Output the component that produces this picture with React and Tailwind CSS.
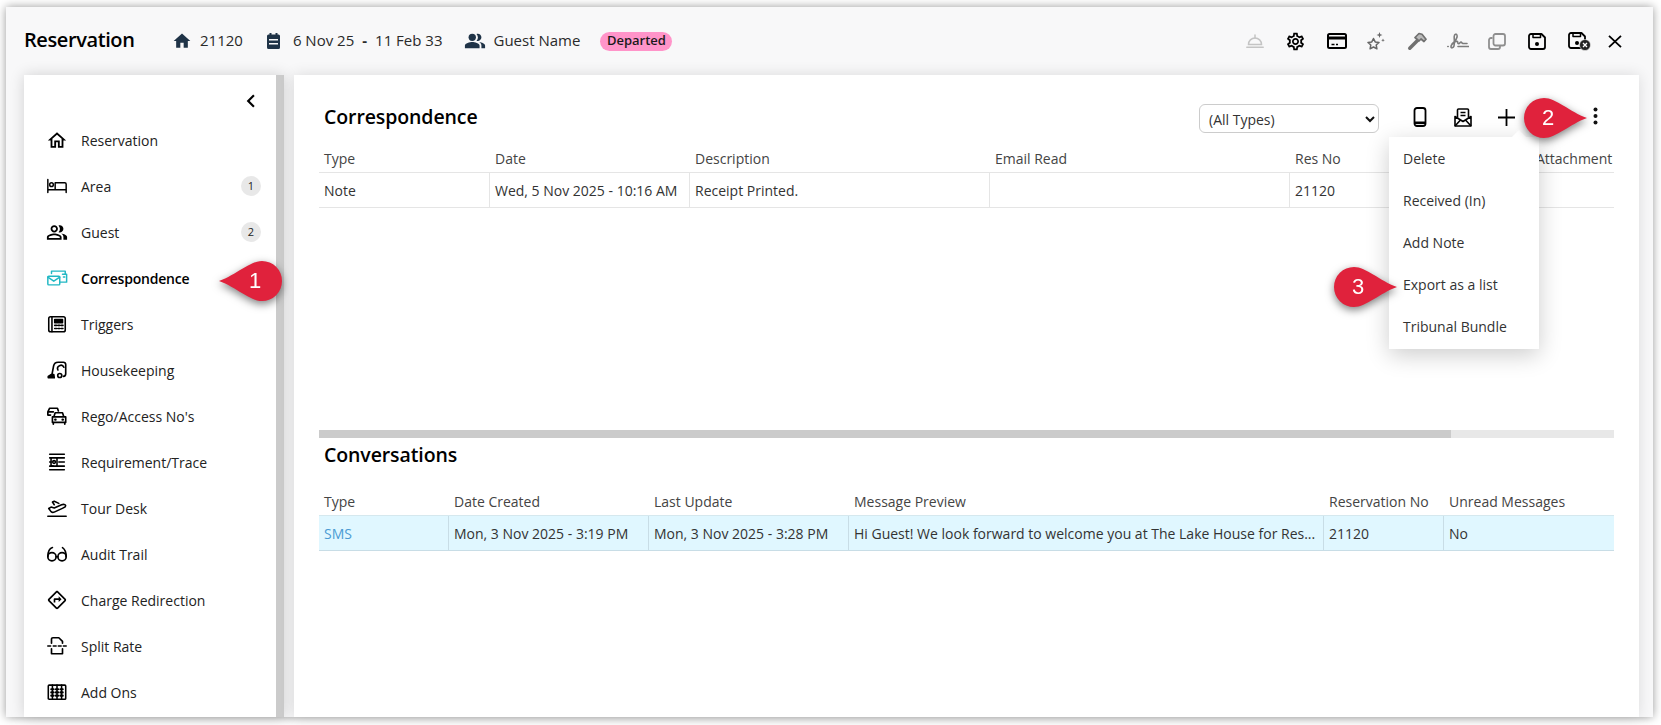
import React from "react";
import { MdHome, MdPeopleAlt, MdOutlineHome, MdOutlinePeopleAlt, MdOutlineDirections, MdOutlineSettings, MdChevronLeft } from "react-icons/md";

// hand drawn where the icon packages have nothing close
const Stroke = ({ children, size = 22, sw = 1.6, className = "" }) => (
    <svg width={size} height={size} viewBox="0 0 24 24" fill="none" stroke="currentColor" strokeWidth={sw} strokeLinecap="round" strokeLinejoin="round" className={className}>
        {children}
    </svg>
);

const BedIcon = () => (
    <Stroke>
        <path d="M2 5v14M2 16h20M22 19V10a1.500 1.500 0 0 0-1.500-1.500H10V16" />
        <circle cx="6" cy="10.500" r="2" />
    </Stroke>
);
const MailsIcon = () => (
    <Stroke className="text-[#22b8c4]">
        <path d="M6 7V4.500h15V7M18 8h4.500v8.500H15" />
        <rect x="2" y="10" width="13" height="9.500" rx="1" />
        <path d="M2 11l6.500 4.500L15 11M19 11h1.500" />
    </Stroke>
);
const TriggersIcon = () => (
    <Stroke sw={1.7}>
        <rect x="3" y="4" width="18" height="16.500" rx="2" />
        <path d="M6.500 4v16.500" />
        <path fill="currentColor" d="M9.500 7h8.500v3.500H9.500z" />
        <path d="M9.500 13.500h2M13 13.500h2M16.500 13.500h2M9.500 17h2M13 17h2M16.500 17h2" />
    </Stroke>
);
const HousekeepingIcon = () => (
    <Stroke sw={1.8}>
        <path d="M6.500 17l1.800-9.500A5 5 0 0 1 13.200 3.500H19a2.500 2.500 0 0 1 2.500 2.500v10a3 3 0 0 1-2.500 3" />
        <path fill="currentColor" d="M2.500 20.500v-1.500l3-2h3l.5 3.500z" />
        <circle cx="15" cy="18" r="2.200" />
        <path d="M13 12a3.500 3.500 0 0 1 6.500-3" />
    </Stroke>
);
const RegoIcon = () => (
    <Stroke sw={1.8}>
        <path d="M2 11V7.500l2-4h8.500l1 3M2 7.500h6M2 11h3" />
        <path d="M8.500 13l1.500-4.500h8l1.500 4.500M7 13h14.500v6H7zM8 19v2M20.500 19v2" />
        <path strokeWidth="2.400" d="M10 16h.5M18 16h.5" />
    </Stroke>
);
const RequirementIcon = () => (
    <Stroke sw={1.7}>
        <path d="M4 3.500h16M4 20.500h16M12 7.500h8M4 7.500h1.500M14 12h6M4 12h1.500M12 16.500h8M4 16.500h4" />
        <rect x="5.500" y="7.500" width="6.500" height="9" rx="0.500" />
        <circle cx="8.800" cy="12" r="1.500" />
    </Stroke>
);
const PlaneIcon = () => (
    <Stroke sw={1.7}>
        <path d="M2 21h20" />
        <path d="M3 12.500l2.500-1.500 3.500 1 8-3.500c2-.8 4.500-.5 4.500 1 0 1.200-1.500 2-3 2.600L9 16.500c-1.500.5-2.500.3-3.500-.5z" />
        <path d="M9 8.500l-2-3 2-.8 5 2.300" />
    </Stroke>
);
const GlassesIcon = () => (
    <Stroke sw={1.8}>
        <circle cx="6.500" cy="15" r="4.500" />
        <circle cx="17.500" cy="15" r="4.500" />
        <path d="M11 15h2M2 15c0-5 2-9 5-10M22 15c0-5-1-8-4-10" />
    </Stroke>
);
const SplitIcon = () => (
    <Stroke sw={1.8}>
        <path d="M6 9V4.500a1.500 1.500 0 0 1 1.500-1.500H14l4 4v2M6 15v5.500h12V15" />
        <path d="M2 12h3M8 12h3M13.500 12h3M19 12h3" />
    </Stroke>
);
const AbacusIcon = () => (
    <Stroke sw={1.7}>
        <rect x="2.500" y="4.500" width="19" height="15.500" rx="1" />
        <path d="M7 4.500V20M12 4.500V20M17 4.500V20" />
        <path strokeWidth="2.400" d="M5.800 9h2.400M10.800 9h2.400M15.800 9h2.400M5.800 12.500h2.400M10.800 12.500h2.400M15.800 12.500h2.400M5.800 16h2.400M10.800 16h2.400M15.800 16h2.400" />
    </Stroke>
);

const navItems = [
    { label: "Reservation", icon: <MdOutlineHome size={23} /> },
    { label: "Area", icon: <BedIcon />, badge: 1 },
    { label: "Guest", icon: <MdOutlinePeopleAlt size={23} />, badge: 2 },
    { label: "Correspondence", icon: <MailsIcon />, active: true },
    { label: "Triggers", icon: <TriggersIcon /> },
    { label: "Housekeeping", icon: <HousekeepingIcon /> },
    { label: "Rego/Access No's", icon: <RegoIcon /> },
    { label: "Requirement/Trace", icon: <RequirementIcon /> },
    { label: "Tour Desk", icon: <PlaneIcon /> },
    { label: "Audit Trail", icon: <GlassesIcon /> },
    { label: "Charge Redirection", icon: <MdOutlineDirections size={20} /> },
    { label: "Split Rate", icon: <SplitIcon /> },
    { label: "Add Ons", icon: <AbacusIcon /> },
];

// header toolbar, viewBox equals the drawn size in px
const BellIcon = () => (
    <svg width="18" height="14" viewBox="0 0 18 14" fill="none" stroke="#c4c4c4" strokeWidth="1.500" strokeLinecap="round">
        <path d="M2.500 10.500a6.500 6.500 0 0 1 13 0z" />
        <path d="M9 1v3M.8 13.200h16.400" />
    </svg>
);
const CardIcon = () => (
    <svg width="20" height="16" viewBox="0 0 20 16" fill="none" stroke="#000" strokeWidth="2">
        <rect x="1" y="1" width="18" height="14" rx="1.500" />
        <path d="M1 5h18" strokeWidth="3" />
        <path d="M4.500 11.500h3M9 11.500h2" strokeWidth="1.600" />
    </svg>
);
const StarsIcon = () => (
    <svg width="18" height="18" viewBox="0 0 18 18" fill="none" stroke="#666" strokeWidth="1.500" strokeLinejoin="round">
        <path d="M6.500 6.500l1.700 3.400 3.800.5-2.800 2.600.7 3.800-3.400-1.800-3.400 1.800.7-3.800L1 10.400l3.800-.5z" />
        <path fill="#666" stroke="none" d="M12.500 0l.8 2.200 2.200.8-2.200.8-.8 2.200-.8-2.200-2.200-.8 2.200-.8zM16 6.500l.5 1.300 1.300.5-1.300.5-.5 1.300-.5-1.300-1.300-.5 1.300-.5z" />
    </svg>
);
const HammerIcon = () => (
    <svg width="20" height="19" viewBox="0 0 20 19">
        <path d="M1.500 15l8-8 2.500 2.500-8 8a1.700 1.700 0 0 1-2.500-2.500z" fill="#707070" />
        <path d="M8 5.500l4-4 3 .8 4 5-2 2.200-3-2.500-2 2z" fill="#bbb" stroke="#707070" strokeWidth="1.700" strokeLinejoin="round" />
    </svg>
);
const SignatureIcon = () => (
    <svg width="22" height="16" viewBox="0 0 22 16" fill="none" stroke="#7c7c7c" strokeWidth="1.600" strokeLinecap="round" strokeLinejoin="round">
        <path d="M5 11C8 9 11 4 10 2 9.300.5 7.500 1.200 7.200 3.500 7 6 8 10 7 13c-.6 2-3 2.500-3 .8 0-2.500 4-5.500 6-5.500 1.500 0 0 2.500 1.500 2.500S13 9 14 9s.5 1.500 2 1.500h4" />
        <path d="M11 13.500h10.500M.8 13.500h.4" />
    </svg>
);
const CopyIcon = () => (
    <svg width="18" height="17" viewBox="0 0 18 17" fill="none" stroke="#8f8f8f" strokeWidth="1.800" strokeLinejoin="round">
        <path d="M4.500 5H3a2 2 0 0 0-2 2v7a2 2 0 0 0 2 2h7a2 2 0 0 0 2-2v-1.500" />
        <rect x="5.500" y="1" width="11.500" height="11.500" rx="2" />
    </svg>
);
const SaveIcon = () => (
    <svg width="18" height="17" viewBox="0 0 18 17" fill="none" stroke="#000" strokeWidth="1.800" strokeLinejoin="round">
        <path d="M3 1h10.500L17 4.500V14a2 2 0 0 1-2 2H3a2 2 0 0 1-2-2V3a2 2 0 0 1 2-2z" />
        <path d="M5 1v3.500h7.500V1" strokeWidth="1.500" />
        <circle cx="9" cy="11" r="2" fill="#000" stroke="none" />
    </svg>
);
const SaveXIcon = () => (
    <span className="relative block h-[19px] w-[23px]">
        <SaveIcon />
        <svg width="12" height="12" viewBox="0 0 12 12" className="absolute bottom-0 right-0">
            <circle cx="6" cy="6" r="5.500" fill="#222" stroke="#f8f8f9" strokeWidth="0.600" />
            <path d="M4 4l4 4M8 4l-4 4" stroke="#fff" strokeWidth="1.300" />
        </svg>
    </span>
);
const CloseIcon = () => (
    <svg width="14" height="13" viewBox="0 0 14 13" fill="none" stroke="#000" strokeWidth="1.800"><path d="M1 .8l12 11.400M13 .8L1 12.200" /></svg>
);
const CalendarIcon = () => (
    <svg width="13" height="16" viewBox="0 0 13 16" fill="#1f3347" fillRule="evenodd">
        <path d="M2.500 0h2v1.500h4V0h2v1.500h1A1.500 1.500 0 0 1 13 3v11.500a1.500 1.500 0 0 1-1.500 1.500h-10A1.500 1.500 0 0 1 0 14.500V3a1.500 1.500 0 0 1 1.500-1.500h1zM2 6v1.500h9V6zM2 10v1.500h9V10z" />
    </svg>
);
const PhoneIcon = () => (
    <svg width="14" height="20" viewBox="0 0 14 20" fill="none" stroke="#000" strokeWidth="1.800">
        <rect x="1.500" y="1" width="11" height="18" rx="2.500" />
        <path d="M1.500 15.800h11" strokeWidth="2.600" />
    </svg>
);
const OpenMailIcon = () => (
    <svg width="18" height="19" viewBox="0 0 18 19" fill="none" stroke="#000" strokeWidth="1.600" strokeLinejoin="round">
        <path d="M3.500 9.500V2a1 1 0 0 1 1-1h9a1 1 0 0 1 1 1v7.500" />
        <path d="M6.500 4.500h5M6.500 7.500h5" />
        <path d="M1 8.500V18h16V8.500L9 13.500z" />
        <path d="M1 18l5.500-6M17 18l-5.500-6" />
    </svg>
);
const PlusIcon = () => (
    <svg width="17" height="17" viewBox="0 0 17 17" stroke="#000" strokeWidth="1.800"><path d="M8.500 0v17M0 8.500h17" /></svg>
);
const KebabIcon = () => (
    <svg width="5" height="18" viewBox="0 0 5 18" fill="#111"><circle cx="2.500" cy="2.500" r="2" /><circle cx="2.500" cy="9" r="2" /><circle cx="2.500" cy="15.500" r="2" /></svg>
);

const Callout = ({ n, left, className, textClass }) => (
    <div className={`absolute h-[40px] w-[63px] drop-shadow-[0_3px_4px_rgba(0,0,0,0.5)] ${className}`}>
        <svg width="63" height="40" viewBox="0 0 63 40" className={`absolute inset-0 ${left ? "-scale-x-100" : ""}`}>
            <path d="M20 0C32 0 46 14 63 20C46 26 32 40 20 40A20 20 0 0 1 20 0Z" fill="#e0223c" />
        </svg>
        <span className={`absolute top-[8px] font-['Liberation_Sans',sans-serif] text-[22px] leading-[24px] text-white ${textClass}`}>{n}</span>
    </div>
);

const firstCols = "grid grid-cols-[171px_200px_300px_300px_241px_83px]";
const secondCols = "grid grid-cols-[130px_200px_200px_475px_120px_170px]";
const headCell = "flex items-center px-[5px] pb-[2px] whitespace-nowrap";
const bodyCell = "flex items-center px-[5px] whitespace-nowrap border-r";

export default function App() {
    return (
        <div className="relative h-[725px] w-[1661px] overflow-hidden bg-white font-['Open_Sans',sans-serif] text-[14px] text-[#333]">
            <div className="ml-[6px] mt-[7px] flex h-[710px] w-[1647px] flex-col bg-[#f8f8f9] shadow-[0_0_9px_rgba(0,0,0,0.4)]">
                <header className="flex h-[68px] shrink-0 items-center pl-[18px] text-[#2a2a2a]">
                    <h1 className="w-[148px] pb-[2px] text-[20px] font-semibold tracking-[-0.4px] text-black">Reservation</h1>
                    <MdHome size={20} className="text-[#1f3347]" />
                    <span className="ml-[8px] pb-[2px] text-[15px]">21120</span>
                    <span className="ml-[24px]"><CalendarIcon /></span>
                    <span className="ml-[13px] pb-[2px] text-[15px]">6 Nov 25</span>
                    <span className="mx-[8px] pb-[2px] text-[15px] font-bold">-</span>
                    <span className="pb-[2px] text-[15px]">11 Feb 33</span>
                    <MdPeopleAlt size={22} className="ml-[21px] text-[#1f3347]" />
                    <span className="ml-[8px] pb-[2px] text-[15px]">Guest Name</span>
                    <span className="ml-[20px] flex h-[19px] w-[72px] items-center justify-center rounded-full bg-[#ff94c9] text-[13px] font-semibold text-[#1a1a1a]">Departed</span>
                    <div className="ml-auto flex items-center pr-[31px]">
                        <span className="mr-[21px]"><BellIcon /></span>
                        <MdOutlineSettings size={21} className="mr-[21px] text-black" />
                        <span className="mr-[20px]"><CardIcon /></span>
                        <span className="mr-[22px]"><StarsIcon /></span>
                        <span className="mr-[20px]"><HammerIcon /></span>
                        <span className="mr-[19px]"><SignatureIcon /></span>
                        <span className="mr-[22px]"><CopyIcon /></span>
                        <span className="mr-[22px]"><SaveIcon /></span>
                        <span className="mr-[17px]"><SaveXIcon /></span>
                        <CloseIcon />
                    </div>
                </header>

                <div className="flex min-h-0 flex-1 pl-[18px] pr-[14px]">
                    <div className="flex shrink-0 shadow-[0_0_14px_rgba(0,0,0,0.16)]">
                        <aside className="relative w-[252px] shrink-0 overflow-hidden bg-white pt-[42px]">
                            <MdChevronLeft size={26} className="absolute left-[214px] top-[13px] text-black" />
                            {navItems.map((item) => (
                                <div key={item.label} className="flex h-[46px] items-center pl-[22px] pr-[15px] text-[#222]">
                                    <span className="flex w-[22px] items-center justify-center text-black">{item.icon}</span>
                                    <span className={`ml-[13px] ${item.active ? "font-semibold tracking-[-0.2px] text-black" : ""}`}>{item.label}</span>
                                    {item.badge && (
                                        <span className="ml-auto flex h-[20px] w-[20px] items-center justify-center rounded-full bg-[#e8e8e8] text-[11px]">{item.badge}</span>
                                    )}
                                </div>
                            ))}
                        </aside>
                        <div className="w-[8px] shrink-0 bg-[#cbcbcb]" />
                    </div>
                    <main className="ml-[10px] flex min-w-0 flex-1 flex-col bg-white pl-[25px] pr-[25px] pt-[13px] shadow-[0_0_14px_rgba(0,0,0,0.12)]">
                        <section className="h-[342px] shrink-0">
                            <div className="flex h-[58px] items-center pl-[5px] pr-[16px]">
                                <h2 className="text-[19.500px] font-semibold tracking-[-0.1px] text-black">Correspondence</h2>
                                <div className="relative ml-auto mt-[3px] flex h-[29px] w-[180px] items-center rounded-[6px] border border-[#ccc] pl-[9px] pt-[2px]">
                                    (All Types)
                                    <svg width="10" height="7" viewBox="0 0 10 7" className="absolute right-[3px] top-[11px]"><path d="M1 1l4 4 4-4" fill="none" stroke="#111" strokeWidth="2" /></svg>
                                </div>
                                <span className="ml-[34px]"><PhoneIcon /></span>
                                <span className="ml-[27px]"><OpenMailIcon /></span>
                                <span className="ml-[26px]"><PlusIcon /></span>
                                <span className="mb-[2px] ml-[78px]"><KebabIcon /></span>
                            </div>
                            <div className={`${firstCols} h-[27px] border-b border-[#e5e5e5] font-medium text-[#444]`}>
                                <div className={headCell}>Type</div>
                                <div className={headCell}>Date</div>
                                <div className={headCell}>Description</div>
                                <div className={headCell}>Email Read</div>
                                <div className={headCell}>Res No</div>
                                <div className={headCell}>Attachment</div>
                            </div>
                            <div className={`${firstCols} h-[35px] border-b border-[#e5e5e5]`}>
                                <div className={`${bodyCell} border-[#e5e5e5]`}>Note</div>
                                <div className={`${bodyCell} border-[#e5e5e5]`}>Wed, 5 Nov 2025 - 10:16 AM</div>
                                <div className={`${bodyCell} border-[#e5e5e5]`}>Receipt Printed.</div>
                                <div className={`${bodyCell} border-[#e5e5e5]`} />
                                <div className={`${bodyCell} border-[#e5e5e5]`}>21120</div>
                                <div />
                            </div>
                        </section>

                        <div className="h-[8px] shrink-0 bg-[#e8e8e8]">
                            <div className="h-full w-[1132px] bg-[#cbcbcb]" />
                        </div>

                        <section>
                            <h2 className="flex h-[34px] items-center pl-[5px] text-[19.500px] font-semibold tracking-[-0.1px] text-black">Conversations</h2>
                            <div className={`${secondCols} mt-[17px] h-[27px] border-b border-[#d5e8ee] font-medium text-[#444]`}>
                                <div className={headCell}>Type</div>
                                <div className={headCell}>Date Created</div>
                                <div className={headCell}>Last Update</div>
                                <div className={headCell}>Message Preview</div>
                                <div className={headCell}>Reservation No</div>
                                <div className={headCell}>Unread Messages</div>
                            </div>
                            <div className={`${secondCols} h-[35px] border-b border-[#c8dde6] bg-[#e0f7ff]`}>
                                <div className={`${bodyCell} border-[#c8dde6] text-[#4a9bd4]`}>SMS</div>
                                <div className={`${bodyCell} border-[#c8dde6]`}>Mon, 3 Nov 2025 - 3:19 PM</div>
                                <div className={`${bodyCell} border-[#c8dde6]`}>Mon, 3 Nov 2025 - 3:28 PM</div>
                                <div className={`${bodyCell} border-[#c8dde6]`}>Hi Guest! We look forward to welcome you at The Lake House for Res...</div>
                                <div className={`${bodyCell} border-[#c8dde6]`}>21120</div>
                                <div className="flex items-center px-[5px]">No</div>
                            </div>
                        </section>
                    </main>
                </div>
            </div>

            {/* kebab menu */}
            <div className="absolute left-[1389px] top-[137px] w-[150px] bg-white py-[1px] shadow-[0_6px_22px_rgba(0,0,0,0.2)]">
                <div className="absolute right-[15px] -top-[5px] h-[10px] w-[10px] rotate-45 bg-white" />
                {["Delete", "Received (In)", "Add Note", "Export as a list", "Tribunal Bundle"].map((label) => (
                    <div key={label} className="relative flex h-[42px] items-center pb-[2px] pl-[14px]">{label}</div>
                ))}
            </div>

            <Callout n="1" left className="left-[219px] top-[261px]" textClass="left-[30px]" />
            <Callout n="2" className="left-[1524px] top-[98px]" textClass="left-[18px]" />
            <Callout n="3" className="left-[1334px] top-[267px]" textClass="left-[18px]" />
        </div>
    );
}
